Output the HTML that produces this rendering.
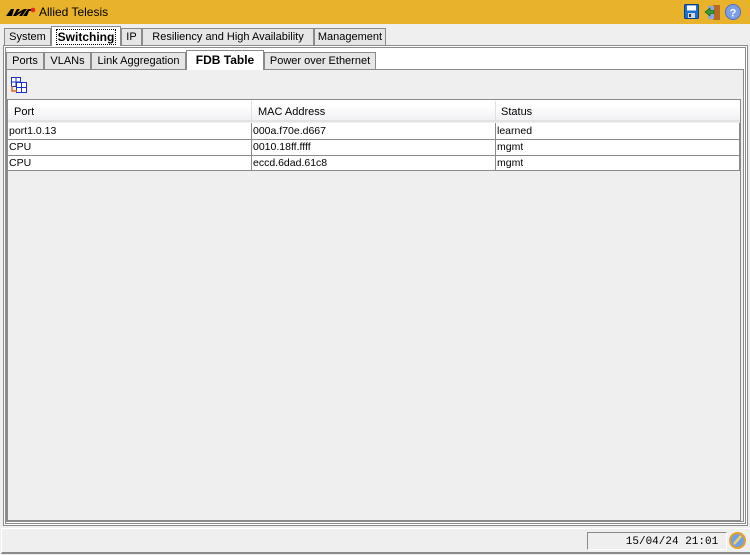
<!DOCTYPE html>
<html><head><style>
*{margin:0;padding:0;box-sizing:border-box}
body{width:750px;height:555px;background:#efefef;font-family:"Liberation Sans","Noto Sans CJK JP",sans-serif;font-size:12px;color:#000;position:relative;overflow:hidden}
.abs{position:absolute}
.hdr{left:0;top:0;width:750px;height:24px;background:#e9b22b}
.tab{position:absolute;height:18px;border:1px solid #8a8a8a;border-bottom:none;background:#e6e6e6;padding:2px 0 0;font-size:11px;white-space:nowrap;text-align:center;overflow:hidden}
.tab.sel{background:#fff;font-weight:bold;height:20px;z-index:2;font-size:12px}
.cell{position:absolute;font-size:10.5px;white-space:nowrap;overflow:hidden;padding-left:1px}
</style></head><body>
<div class="abs hdr"></div>
<svg class="abs" style="left:6px;top:7px" width="30" height="10" viewBox="0 0 30 10"><path d="M0 9 L5 2 L8 2 L6 9Z M7 9 L11 2 L14 2 L11 6 L18 2 L21 2 L16 9 L13 9 L16 5 L10 9Z M17 9 L22 2 L27 2 L26 4 L23 4 L21 9Z" fill="#000"/><circle cx="27" cy="3" r="2.3" fill="#e8261d"/></svg>
<div class="abs" style="left:39px;top:5px;font-size:12px">Allied Telesis</div>
<svg class="abs" style="left:684px;top:4px" width="15" height="15"><rect x="0.5" y="0.5" width="14" height="14" rx="1" fill="#1b6fd1" stroke="#0b3d80"/><rect x="3" y="1.5" width="9" height="5" fill="#fff"/><rect x="4" y="9" width="7" height="5" fill="#cfd8e8"/><rect x="5" y="10" width="2" height="3" fill="#333"/></svg>
<svg class="abs" style="left:704px;top:4px" width="17" height="16"><rect x="9" y="1" width="7" height="15" fill="#b86a24"/><rect x="4" y="2" width="6" height="13" fill="#8aa9d6"/><path d="M1 8 L6 4 L6 6.5 L10 6.5 L10 9.5 L6 9.5 L6 12Z" fill="#2fa12f" stroke="#155515" stroke-width=".6"/></svg>
<svg class="abs" style="left:725px;top:4px" width="16" height="16"><circle cx="8" cy="8" r="7.5" fill="#7d9ee8" stroke="#4f6fc0"/><text x="8" y="12.5" font-size="11" font-weight="bold" fill="#fff" text-anchor="middle" font-family="Liberation Sans">?</text></svg>

<div class="tab" style="left:4px;top:28px;width:47px">System</div>
<div class="tab sel" style="left:51px;top:26px;width:70px;padding-top:3px"><span style="outline:1px dotted #000;padding:0 1px">Switching</span></div>
<div class="tab" style="left:121px;top:28px;width:21px">IP</div>
<div class="tab" style="left:142px;top:28px;width:172px">Resiliency and High Availability</div>
<div class="tab" style="left:314px;top:28px;width:72px">Management</div>
<div class="abs" style="left:3px;top:45px;width:745px;height:481px;border:1px solid #8a8a8a;background:#fff;box-shadow:inset 0 0 0 1px #fff,inset 0 0 0 2px #8a8a8a"></div>

<div class="tab" style="left:6px;top:52px;width:38px">Ports</div>
<div class="tab" style="left:44px;top:52px;width:47px">VLANs</div>
<div class="tab" style="left:91px;top:52px;width:95px">Link Aggregation</div>
<div class="tab sel" style="left:186px;top:50px;width:78px;font-size:12px">FDB Table</div>
<div class="tab" style="left:264px;top:52px;width:112px">Power over Ethernet</div>
<div class="abs" style="left:6px;top:69px;width:738px;height:453px;border:1px solid #8a8a8a;background:#efefef"></div>

<svg class="abs" style="left:11px;top:77px" width="16" height="16"><g fill="#fff" stroke="#1a2fd0" stroke-width="1"><rect x="0.5" y="0.5" width="9" height="9"/><rect x="5.5" y="5.5" width="10" height="10"/><path d="M5 0.5V9.5M0.5 5H9.5M10.5 5.5V15.5M5.5 10.5H15.5"/></g><path d="M1 9V14H6" stroke="#e8601c" stroke-width="1.4" fill="none"/></svg>

<div class="abs" style="left:7px;top:99px;width:734px;height:422px;border:1px solid #8a8a8a;background:#efefef"></div>
<div class="abs" style="left:8px;top:100px;width:732px;height:22px;background:linear-gradient(#fff,#fff 30%,#f0f1f4);border-bottom:2px solid #e2e2e2"></div>
<div class="abs" style="left:251px;top:101px;width:1px;height:20px;background:#e0e0e0"></div>
<div class="abs" style="left:495px;top:101px;width:1px;height:20px;background:#e0e0e0"></div>
<div class="cell" style="left:13px;top:106px;font-size:11px">Port</div>
<div class="cell" style="left:257px;top:106px;font-size:11px">MAC Address</div>
<div class="cell" style="left:500px;top:106px;font-size:11px">Status</div>

<div class="abs" style="left:8px;top:123px;width:732px;height:48px;background:#fff;border-bottom:1px solid #8a8a8a"></div>
<div class="abs" style="left:8px;top:139px;width:732px;height:1px;background:#8a8a8a"></div>
<div class="abs" style="left:8px;top:155px;width:732px;height:1px;background:#8a8a8a"></div>
<div class="abs" style="left:251px;top:123px;width:1px;height:48px;background:#8a8a8a"></div>
<div class="abs" style="left:495px;top:123px;width:1px;height:48px;background:#8a8a8a"></div>
<div class="abs" style="left:739px;top:123px;width:1px;height:48px;background:#8a8a8a"></div>
<div class="cell" style="left:8px;top:125px">port1.0.13</div><div class="cell" style="left:252px;top:125px">000a.f70e.d667</div><div class="cell" style="left:496px;top:125px">learned</div>
<div class="cell" style="left:8px;top:141px">CPU</div><div class="cell" style="left:252px;top:141px">0010.18ff.ffff</div><div class="cell" style="left:496px;top:141px">mgmt</div>
<div class="cell" style="left:8px;top:157px">CPU</div><div class="cell" style="left:252px;top:157px">eccd.6dad.61c8</div><div class="cell" style="left:496px;top:157px">mgmt</div>

<div class="abs" style="left:1px;top:528px;width:749px;height:26px;border-top:1px solid #fff;border-left:1px solid #fff;border-bottom:2px solid #8a8a8a"></div>
<div class="abs" style="left:587px;top:532px;width:140px;height:18px;border:1px solid #8a8a8a;border-right-color:#fff;border-bottom-color:#fff;text-align:center;font-family:'Liberation Mono',monospace;font-size:11px;padding:3px 0 0 30px">15/04/24 21:01</div>
<svg class="abs" style="left:729px;top:532px" width="17" height="17"><circle cx="8.5" cy="8.5" r="7.5" fill="#6fa0e8" stroke="#e8a020" stroke-width="2"/><path d="M5 12L12 4" stroke="#f5d060" stroke-width="2.5"/></svg>
</body></html>
